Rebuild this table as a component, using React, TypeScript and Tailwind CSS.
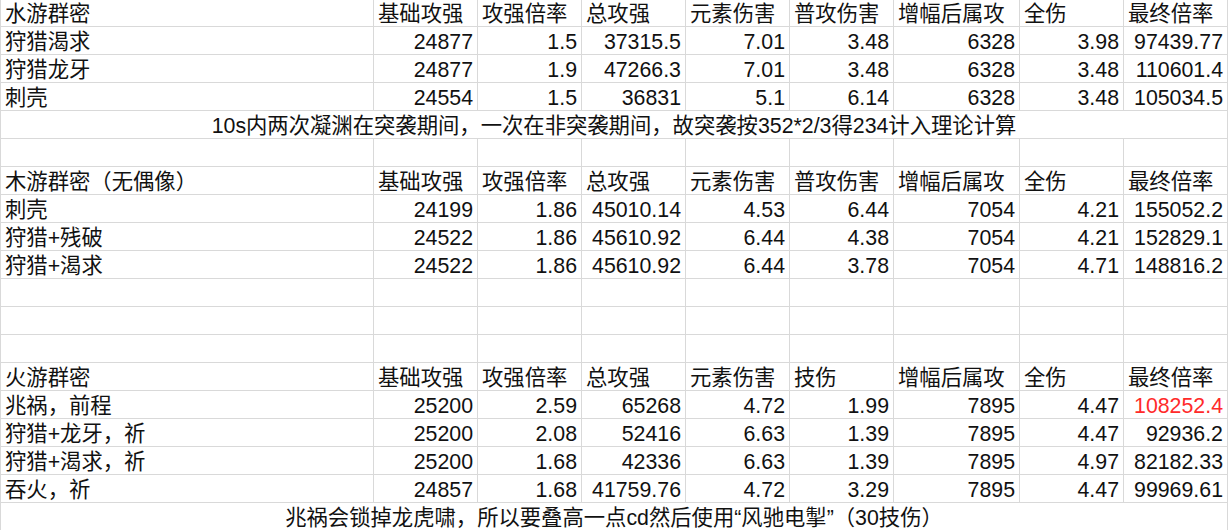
import React from "react";

type Row =
  | { kind: "data"; cells: string[]; red?: number }
  | { kind: "note"; text: string }
  | { kind: "empty" };

const header1 = ["基础攻强", "攻强倍率", "总攻强", "元素伤害", "普攻伤害", "增幅后属攻", "全伤", "最终倍率"];
const header3 = ["基础攻强", "攻强倍率", "总攻强", "元素伤害", "技伤", "增幅后属攻", "全伤", "最终倍率"];

const rows: Row[] = [
  { kind: "data", cells: ["水游群密", ...header1] },
  { kind: "data", cells: ["狩猎渴求", "24877", "1.5", "37315.5", "7.01", "3.48", "6328", "3.98", "97439.77"] },
  { kind: "data", cells: ["狩猎龙牙", "24877", "1.9", "47266.3", "7.01", "3.48", "6328", "3.48", "110601.4"] },
  { kind: "data", cells: ["刺壳", "24554", "1.5", "36831", "5.1", "6.14", "6328", "3.48", "105034.5"] },
  { kind: "note", text: "10s内两次凝渊在突袭期间，一次在非突袭期间，故突袭按352*2/3得234计入理论计算" },
  { kind: "empty" },
  { kind: "data", cells: ["木游群密（无偶像）", ...header1] },
  { kind: "data", cells: ["刺壳", "24199", "1.86", "45010.14", "4.53", "6.44", "7054", "4.21", "155052.2"] },
  { kind: "data", cells: ["狩猎+残破", "24522", "1.86", "45610.92", "6.44", "4.38", "7054", "4.21", "152829.1"] },
  { kind: "data", cells: ["狩猎+渴求", "24522", "1.86", "45610.92", "6.44", "3.78", "7054", "4.71", "148816.2"] },
  { kind: "empty" },
  { kind: "empty" },
  { kind: "empty" },
  { kind: "data", cells: ["火游群密", ...header3] },
  { kind: "data", cells: ["兆祸，前程", "25200", "2.59", "65268", "4.72", "1.99", "7895", "4.47", "108252.4"], red: 8 },
  { kind: "data", cells: ["狩猎+龙牙，祈", "25200", "2.08", "52416", "6.63", "1.39", "7895", "4.47", "92936.2"] },
  { kind: "data", cells: ["狩猎+渴求，祈", "25200", "1.68", "42336", "6.63", "1.39", "7895", "4.97", "82182.33"] },
  { kind: "data", cells: ["吞火，祈", "24857", "1.68", "41759.76", "4.72", "3.29", "7895", "4.47", "99969.61"] },
  { kind: "note", text: "兆祸会锁掉龙虎啸，所以要叠高一点cd然后使用“风驰电掣”（30技伤）" },
];

const isNumber = (s: string) => /^[0-9.]+$/.test(s);

export default function App() {
  return (
    <div
      className="w-[1229px] h-[530px] overflow-hidden bg-white text-[21.33px] leading-[23px] text-[#111] [text-spacing-trim:space-all]"
      style={{ fontFamily: '"Liberation Sans", "Noto Sans CJK SC", sans-serif' }}
    >
      <div className="grid grid-cols-[373px_104px_104px_104px_104px_104px_126px_104px_104px] border-l border-[#d9d9d9] w-[1228px]">
        {rows.map((row, r) => {
          const h = r === 0 ? "h-[27px]" : "h-[28px]";
          if (row.kind === "note") {
            return (
              <div
                key={r}
                className={`col-span-9 ${h} border-b border-r border-[#d9d9d9] flex items-end justify-center whitespace-nowrap`}
              >
                {row.text}
              </div>
            );
          }
          if (row.kind === "empty") {
            return Array.from({ length: 9 }).map((_, c) => (
              <div key={`${r}-${c}`} className={`${h} border-b border-r border-[#d9d9d9]`} />
            ));
          }
          return row.cells.map((cell, c) => (
            <div
              key={`${r}-${c}`}
              className={`${h} border-b border-r border-[#d9d9d9] flex items-end whitespace-nowrap overflow-visible ${
                isNumber(cell) ? "justify-end pr-[4px]" : "justify-start pl-[4px]"
              } ${row.red === c ? "text-[#ff2a2a]" : ""}`}
            >
              {cell}
            </div>
          ));
        })}
      </div>
    </div>
  );
}
